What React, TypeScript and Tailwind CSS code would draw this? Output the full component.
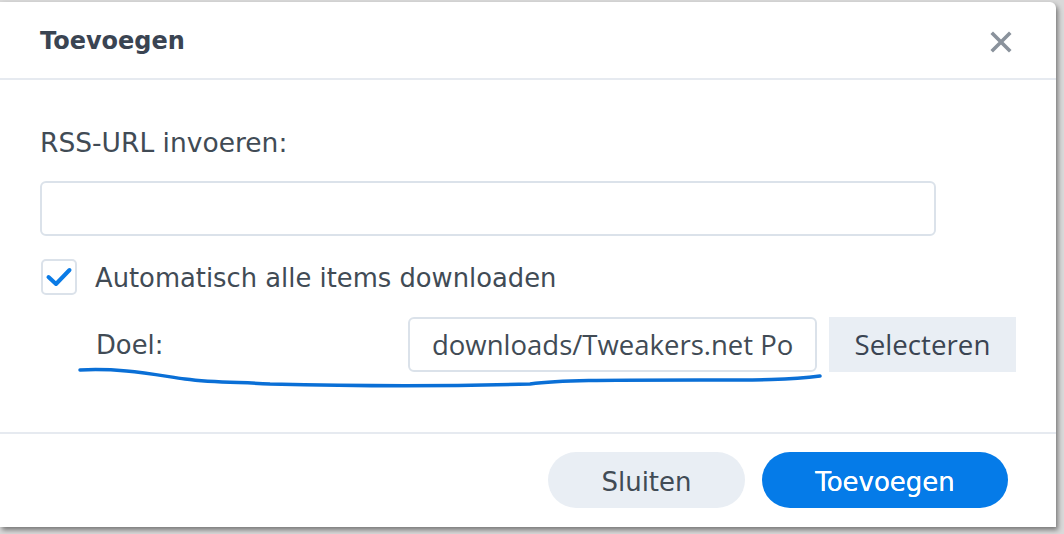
import React, { useState } from 'react';

const font = { fontFamily: '"DejaVu Sans", Verdana, sans-serif' };
const openSans = { fontFamily: '"Open Sans", "Noto Sans", sans-serif' };

export default function App() {
  const [auto, setAuto] = useState(true);

  return (
    <div className="w-[1064px] h-[534px] overflow-hidden bg-[#d9d9d9] pt-[2px]" style={font}>
      <div className="relative w-[1056px] h-[525px] bg-white rounded-tr-[6px] shadow-[2px_3px_5px_rgba(0,0,0,0.45)] flex flex-col text-[#414b55]">
        {/* Header */}
        <div className="h-[78px] shrink-0 flex items-center justify-between pl-[40px] pr-[40px] border-b-2 border-[#e6eaf0]">
          <h2 className="text-[24px] leading-[30px] font-bold text-[#3a4452] mt-[2px]">Toevoegen</h2>
          <button className="w-[30px] h-[30px] flex items-center justify-center mt-[4px]">
            <svg width="22" height="22" viewBox="0 0 22 22">
              <path d="M3 3 L19 19 M19 3 L3 19" stroke="#8a929c" strokeWidth="3.6" strokeLinecap="square" />
            </svg>
          </button>
        </div>

        {/* Body */}
        <div className="flex-1 flex flex-col pl-[40px] pr-[40px] pt-[47px]">
          <label className="text-[26.5px] leading-[32px]">RSS-URL invoeren:</label>
          <input className="mt-[22px] w-[896px] h-[55px] rounded-[6px] border-2 border-[#dbe2ea] outline-none px-3" />

          <div className="mt-[23px] flex items-center gap-[18px]">
            <button
              onClick={() => setAuto(!auto)}
              className="w-[36px] h-[36px] rounded-[5px] border-2 border-[#dbe2ea] flex items-center justify-center ml-[1px]"
            >
              {auto && (
                <svg width="28" height="22" viewBox="0 0 28 22">
                  <path d="M3.5 11 L11 18 L24.5 4" fill="none" stroke="#0a7be6" strokeWidth="4" strokeLinecap="round" strokeLinejoin="round" />
                </svg>
              )}
            </button>
            <span className="text-[25.8px] leading-[32px] mt-[2px]">Automatisch alle items downloaden</span>
          </div>

          <div className="mt-[22px] flex items-center pl-[56px] pr-0 -mr-[40px]">
            <span className="text-[25.8px] leading-[32px] w-[312px]">Doel:</span>
            <div className="w-[409px] h-[55px] rounded-[6px] border-2 border-[#dbe2ea] flex items-center px-[22px] text-[27.5px] overflow-hidden whitespace-nowrap" style={openSans}>
              downloads/Tweakers.net Po
            </div>
            <button className="ml-[12px] w-[187px] h-[55px] bg-[#e9eef4] text-[27.7px] text-[#3a4452] flex items-center justify-center" style={openSans}>
              Selecteren
            </button>
          </div>
        </div>

        {/* Footer */}
        <div className="h-[95px] shrink-0 border-t-2 border-[#e6eaf0] flex items-center justify-end gap-[17px] pr-[48px] pb-[2px]">
          <button className="w-[197px] h-[56px] rounded-full bg-[#e9eef4] text-[26px] text-[#414b55] pt-[5px]">Sluiten</button>
          <button className="w-[246px] h-[56px] rounded-full bg-[#057be8] text-[26px] text-white pt-[5px] [text-shadow:0_0_0.4px_white]">Toevoegen</button>
        </div>

        {/* hand-drawn annotation */}
        <svg className="absolute left-0 top-0 pointer-events-none" width="1056" height="525">
          <path
            d="M80 368 C 120 366, 150 372, 185 377 C 215 381, 240 380, 270 382 C 350 384, 460 384, 530 382 C 560 378, 600 378, 700 378 C 760 378, 790 378, 820 374"
            fill="none"
            stroke="#0a6fd6"
            strokeWidth="3.5"
            strokeLinecap="round"
          />
        </svg>
      </div>
    </div>
  );
}
